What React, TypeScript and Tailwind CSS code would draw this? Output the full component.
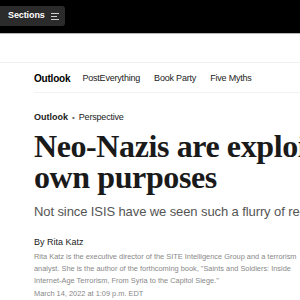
import React from "react";

const navItems = ["PostEverything", "Book Party", "Five Myths"];

const App: React.FC = () => {
  return (
    <div className="w-[300px] h-[300px] overflow-hidden bg-white font-['Liberation_Sans',sans-serif]">
      <header className="h-[34px] bg-black border-b border-[#b5b5b5] flex items-start pt-[6px]">
        <button className="h-[20px] w-[65px] bg-[#2b2b2b] rounded-r-[3px] flex items-center pl-[8px] gap-[6px]">
          <span className="text-white text-[9px] font-bold tracking-[-0.1px]">Sections</span>
          <svg width="8" height="7" viewBox="0 0 8 7" fill="none" stroke="#cfcfcf" strokeWidth="1">
            <path d="M0 0.5h8M0 3.5h6M0 6.5h8" />
          </svg>
        </button>
      </header>

      <div className="h-[29px] border-b border-[#f0f0f0]" />

      <nav className="ml-[34px] h-[30px] pt-[2px] border-b border-[#f2f2f2] flex items-center gap-[12px] text-[9px] text-[#222]">
        <span className="font-bold text-[10px] text-black tracking-[-0.2px]">Outlook</span>
        {navItems.map((item) => (
          <span key={item} className="tracking-[-0.2px] mr-[2px]">
            {item}
          </span>
        ))}
      </nav>

      <main className="pl-[34px] pt-[18px] whitespace-nowrap">
        <div className="flex items-center gap-[4px] text-[9px] text-[#222]">
          <span className="font-bold">Outlook</span>
          <span className="text-[#666] text-[8px]">•</span>
          <span className="tracking-[-0.2px]">Perspective</span>
        </div>
        <h1 className="mt-[6px] font-['Liberation_Serif',serif] font-bold text-[32px] leading-[31px] text-[#1a1a1a] tracking-[-0.4px]">
          Neo-Nazis are exploiting the war for their
          <br />
          own purposes
        </h1>
        <p className="mt-[10px] text-[13px] leading-[18px] text-[#555] tracking-[-0.1px]">
          Not since ISIS have we seen such a flurry of recruitment
        </p>
        <div className="mt-[15px] text-[9px] text-[#222]">By Rita Katz</div>
        <div className="mt-[2px] text-[7.4px] leading-[12px] text-[#888]">
          Rita Katz is the executive director of the SITE Intelligence Group and a terrorism
          <br />
          analyst. She is the author of the forthcoming book, "Saints and Soldiers: Inside
          <br />
          Internet-Age Terrorism, From Syria to the Capitol Siege."
        </div>
        <div className="mt-[1px] text-[7.4px] text-[#888]">March 14, 2022 at 1:09 p.m. EDT</div>
      </main>
    </div>
  );
};

export default App;
